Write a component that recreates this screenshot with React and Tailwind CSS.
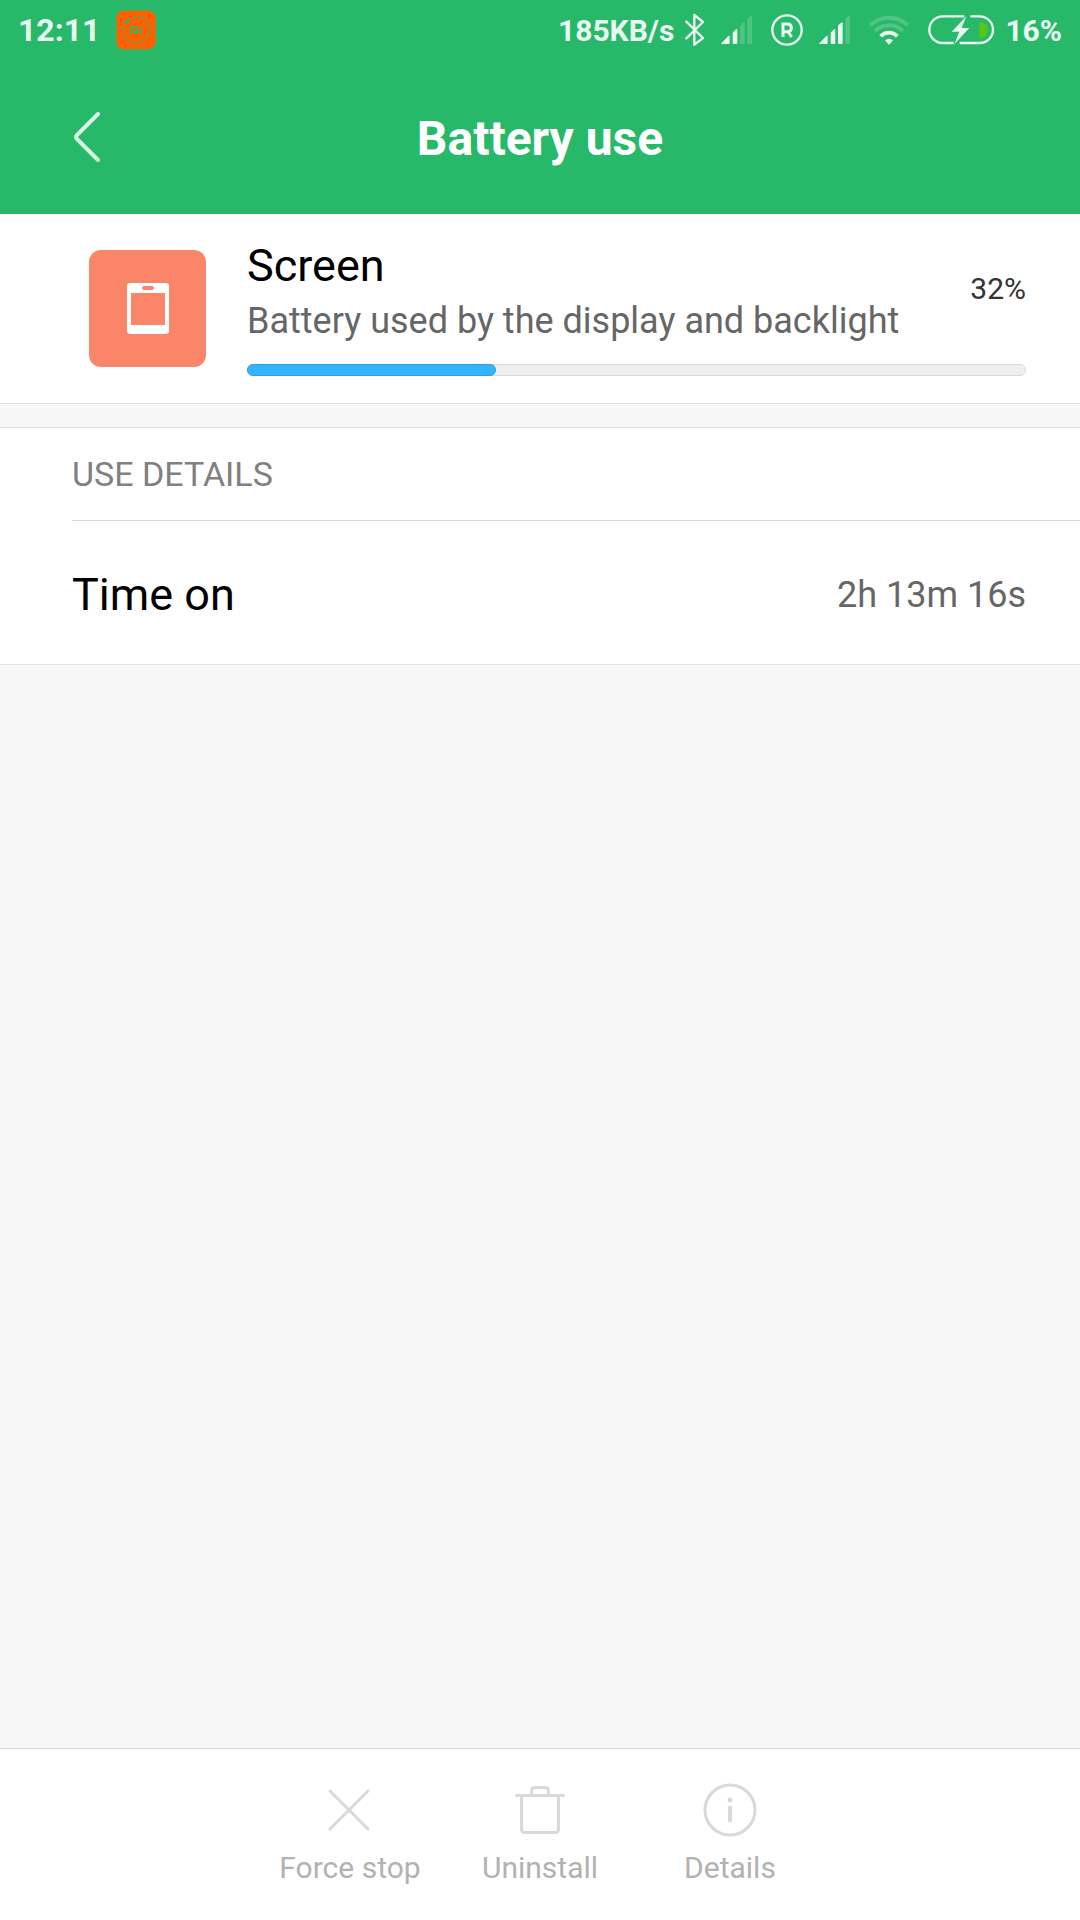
const actions = [
  { name: "Force stop", icon: CloseIcon },
  { name: "Uninstall", icon: TrashIcon },
  { name: "Details", icon: InfoIcon },
];

const signalBars = [
  "M2 84 Q0 84 1 82 L22 60 Q26 57 26 62 V80 Q26 84 22 84 Z",
  "M35 53 Q35 50 37 48 L45 40 Q49 37 49 42 V80 Q49 84 45 84 H39 Q35 84 35 80 Z",
  "M57 31 Q57 28 59 26 L67 20 Q71 17 71 22 V80 Q71 84 67 84 H61 Q57 84 57 80 Z",
  "M79 10 Q79 7 81 6 L89 1 Q93 -1 93 4 V80 Q93 84 89 84 H83 Q79 84 79 80 Z",
];

function MiFitIcon() {
  return (
    <svg className="ml-4 size-10" viewBox="0 0 120 120" fill="none">
      <path
        d="M18 2 H102 L113 8 L119 20 V100 L113 111 L102 118 H18 L7 112 L2 101 V18 L7 7 Z"
        fill="#ff6100"
      />
      <path
        d="M53 20 A40 40 0 1 1 21 50"
        stroke="#28b869"
        strokeWidth="3"
        strokeDasharray="24 2"
      />
      <path d="M29 39 L39 30" stroke="#28b869" strokeWidth="8" strokeLinecap="round" />
      <path
        d="M45 72 V52 H58 Q63 52 63 57 V72 M54 59 V72 M74 49 V72"
        stroke="#28b869"
        strokeWidth="5"
      />
    </svg>
  );
}

function BluetoothIcon() {
  return (
    <svg className="ml-[11px] h-9 w-5" viewBox="0 0 60 108" fill="none">
      <path
        d="M4 29 L54 78 L28 98 V9 L54 30 L4 79"
        stroke="currentColor"
        strokeWidth="7"
        strokeLinecap="round"
        strokeLinejoin="round"
      />
    </svg>
  );
}

function SignalIcon({ level }) {
  return (
    <svg className="ml-4 h-7 w-8" viewBox="0 0 96 84" fill="currentColor">
      {signalBars.map((d, i) => (
        <path key={d} d={d} opacity={i < level ? 1 : 0.2} />
      ))}
    </svg>
  );
}

function RoamingIcon() {
  return (
    <svg className="ml-[18px] size-8" viewBox="0 0 96 96" fill="none" stroke="currentColor">
      <circle cx="48" cy="48" r="44" strokeWidth="7" />
      <path d="M36 69 V30 H50 Q61 30 61 42 Q61 53 50 53 H36 M51 53 L62 69" strokeWidth="9" />
    </svg>
  );
}

function WifiIcon() {
  return (
    <svg className="ml-[18px] h-8 w-10" viewBox="0 0 120 96" fill="none" stroke="currentColor">
      <path d="M4 34 A80 80 0 0 1 116 34" strokeWidth="12" opacity="0.2" />
      <path d="M19 51 A58 58 0 0 1 101 51" strokeWidth="12" opacity="0.2" />
      <path d="M35 67 A34 34 0 0 1 85 67" strokeWidth="11" />
      <path d="M48 79 Q60 70 72 79 L62 91 Q60 93 58 91 Z" fill="currentColor" stroke="none" />
    </svg>
  );
}

function ChargingIcon() {
  return (
    <svg className="ml-[18px] h-8 w-17" viewBox="0 0 204 96" fill="none">
      <path
        d="M112 7 H47 A40 40 0 0 0 47 87 H80 M98 87 H158 A40 40 0 0 0 158 7 H130"
        stroke="currentColor"
        strokeWidth="7"
      />
      <path d="M118 7 L74 53 H97 L82 91 L127 42 H104 Z" fill="currentColor" />
      <path d="M157 23 Q183 26 183 48 Q183 70 157 73 Z" fill="#55c718" />
    </svg>
  );
}

function BackIcon() {
  return (
    <svg className="h-[50px] w-8" viewBox="0 0 32 50" fill="none">
      <path
        d="M26 2 L5 23 Q3 25 5 27 L26 48"
        stroke="#d4f1e1"
        strokeWidth="4"
        strokeLinecap="round"
      />
    </svg>
  );
}

function ScreenIcon() {
  return (
    <svg
      className="size-[117px] shrink-0 rounded-xl bg-[#fb8569]"
      viewBox="0 0 117 117"
      fill="none"
    >
      <rect x="38" y="33" width="42" height="51" rx="3" fill="white" />
      <rect x="53" y="36" width="12" height="4" rx="2" fill="#fb8569" />
      <rect x="42" y="43" width="34" height="32" fill="#fb8569" />
    </svg>
  );
}

function CloseIcon() {
  return (
    <svg className="size-14" viewBox="0 0 56 56" stroke="#d9d9d9" strokeWidth="3">
      <path d="M8 9 L46 47 M46 9 L8 47" strokeLinecap="round" />
    </svg>
  );
}

function TrashIcon() {
  return (
    <svg className="size-14" viewBox="0 0 56 56" fill="none" stroke="#d9d9d9" strokeWidth="3">
      <path d="M4.500 13.500 H51.500" strokeLinecap="round" />
      <path d="M9.500 14 V47 Q9.500 50.500 13 50.500 H43 Q46.500 50.500 46.500 47 V14" />
      <path d="M19.500 13 V9 Q19.500 5.500 23 5.500 H33 Q36.500 5.500 36.500 9 V13" />
    </svg>
  );
}

function InfoIcon() {
  return (
    <svg className="size-14" viewBox="0 0 56 56" fill="none" stroke="#d9d9d9">
      <circle cx="28" cy="28" r="25" strokeWidth="3" />
      <circle cx="28" cy="18" r="2.500" fill="#d9d9d9" stroke="none" />
      <path d="M28 25.500 V38.500" strokeWidth="4" strokeLinecap="round" />
    </svg>
  );
}

function StatusBar() {
  return (
    <div className="flex h-[60px] items-center justify-between px-[18px] text-[30px] font-bold text-[#e9f8f0]">
      <div className="flex items-center">
        <span className="text-[32px]">12:11</span>
        <MiFitIcon />
      </div>
      <div className="flex items-center">
        <span>185KB/s</span>
        <BluetoothIcon />
        <SignalIcon level={2} />
        <RoamingIcon />
        <SignalIcon level={3} />
        <WifiIcon />
        <ChargingIcon />
        <span className="ml-2.5">16%</span>
      </div>
    </div>
  );
}

export default function App() {
  const usage = 32;

  return (
    <div className="flex min-h-screen flex-col bg-[#f7f7f7] font-[Roboto,sans-serif]">
      <header className="bg-[#28b869]">
        <StatusBar />
        <div className="grid h-[154px] grid-cols-[1fr_auto_1fr] items-center px-[72px] pt-1">
          <button type="button" aria-label="Back" className="justify-self-start pb-1">
            <BackIcon />
          </button>
          <h1 className="text-[48px] font-bold text-white">Battery use</h1>
        </div>
      </header>

      <main className="flex-1">
        <section className="flex items-start border-b border-[#e2e2e2] bg-white pt-6 pr-[54px] pb-[27px] pl-[89px]">
          <div className="pt-3">
            <ScreenIcon />
          </div>
          <div className="ml-[41px] flex-1">
            <div className="flex items-center justify-between">
              <div>
                <h2 className="text-[45px] leading-[56px] text-black">Screen</h2>
                <p className="mt-1 text-[36px] leading-[46px] text-[#666666]">
                  Battery used by the display and backlight
                </p>
              </div>
              <span className="pb-1.5 text-[30px] text-[#333333]">{usage}%</span>
            </div>
            <div
              role="progressbar"
              aria-label="Screen battery use"
              aria-valuenow={usage}
              className="mt-5 h-3 rounded-full border border-[#d9d9d9] bg-[#efefef]"
            >
              <div
                className="-m-px h-3 rounded-full border border-[#2b9fe0] bg-[#33b4ff]"
                style={{ width: `${usage}%` }}
              />
            </div>
          </div>
        </section>

        <section className="mt-[23px] border-y border-[#e2e2e2] bg-white pl-[72px]">
          <h2 className="flex h-[93px] items-center border-b border-[#d9d9d9] text-[34px] text-[#808080]">
            USE DETAILS
          </h2>
          <div className="flex h-[143px] items-center justify-between pt-1 pr-[54px]">
            <span className="text-[45px] text-black">Time on</span>
            <span className="text-[36px] text-[#666666]">2h 13m 16s</span>
          </div>
        </section>
      </main>

      <footer className="flex justify-center border-t border-[#d9d9d9] bg-white pt-[33px] pb-[34px]">
        {actions.map(({ name, icon: Icon }) => (
          <button
            key={name}
            type="button"
            disabled
            className="flex w-[190px] flex-col items-center gap-3 text-[30px] leading-9 text-[#b2b2b2]"
          >
            <Icon />
            {name}
          </button>
        ))}
      </footer>
    </div>
  );
}
